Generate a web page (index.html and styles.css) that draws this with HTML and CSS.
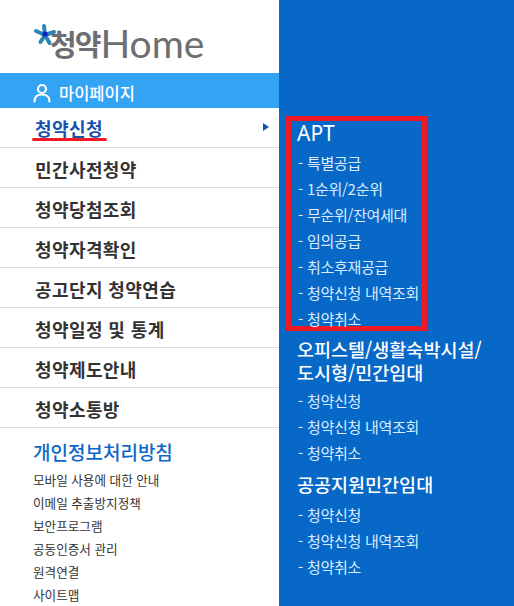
FILE: index.html
```html
<!DOCTYPE html>
<html lang="ko">
<head>
<meta charset="utf-8">
<title>청약Home</title>
<link rel="stylesheet" href="styles.css">
</head>
<body>
<div class="app">
  <aside class="side">
    <div class="logo">
      <span class="logo-ko">청약</span><span class="logo-en">Home</span>
      <svg class="star" width="24" height="24" viewBox="0 0 24 24">
        <g stroke="#2b86b4" stroke-width="4" stroke-linecap="round">
          <path d="M12 12 L11 3"/><path d="M12 12 L21 9"/><path d="M12 12 L3 8"/><path d="M12 12 L7.500 19"/><path d="M12 12 L16.500 20"/>
        </g>
        <circle cx="12" cy="11" r="2.600" fill="#0a22c8"/>
      </svg>
    </div>
    <a class="mypage">
      <svg width="18" height="20" viewBox="0 0 18 20" fill="none" stroke="#fff" stroke-width="2.200" stroke-linecap="round"><circle cx="9" cy="6" r="4"/><path d="M1.500 18.500c0-4.500 3-7 7.500-7s7.500 2.500 7.500 7"/></svg>
      <span>마이페이지</span>
    </a>
    <nav class="main-nav">
      <a class="nav-row active"><span class="active-label">청약신청</span><i class="caret"></i></a>
      <a class="nav-row">민간사전청약</a>
      <a class="nav-row">청약당첨조회</a>
      <a class="nav-row">청약자격확인</a>
      <a class="nav-row">공고단지 청약연습</a>
      <a class="nav-row">청약일정 및 통계</a>
      <a class="nav-row">청약제도안내</a>
      <a class="nav-row">청약소통방</a>
    </nav>
    <div class="foot">
      <a class="privacy">개인정보처리방침</a>
      <a class="foot-link">모바일 사용에 대한 안내</a>
      <a class="foot-link">이메일 추출방지정책</a>
      <a class="foot-link">보안프로그램</a>
      <a class="foot-link">공동인증서 관리</a>
      <a class="foot-link">원격연결</a>
      <a class="foot-link">사이트맵</a>
    </div>
  </aside>
  <section class="panel">
    <div class="group boxed">
      <h2 class="head">APT</h2>
      <ul class="list">
        <li><span class="dash">-</span>특별공급</li>
        <li><span class="dash">-</span>1순위/2순위</li>
        <li><span class="dash">-</span>무순위/잔여세대</li>
        <li><span class="dash">-</span>임의공급</li>
        <li><span class="dash">-</span>취소후재공급</li>
        <li><span class="dash">-</span>청약신청 내역조회</li>
        <li><span class="dash">-</span>청약취소</li>
      </ul>
    </div>
    <div class="group second">
      <h2 class="head">오피스텔/생활숙박시설/<br>도시형/민간임대</h2>
      <ul class="list">
        <li><span class="dash">-</span>청약신청</li>
        <li><span class="dash">-</span>청약신청 내역조회</li>
        <li><span class="dash">-</span>청약취소</li>
      </ul>
    </div>
    <div class="group third">
      <h2 class="head">공공지원민간임대</h2>
      <ul class="list">
        <li><span class="dash">-</span>청약신청</li>
        <li><span class="dash">-</span>청약신청 내역조회</li>
        <li><span class="dash">-</span>청약취소</li>
      </ul>
    </div>
  </section>
</div>
</body>
</html>
```
FILE: styles.css
```css
* { box-sizing: border-box; }
html, body { margin: 0; padding: 0; }
body { font-family: "Noto Sans CJK KR", "Noto Sans", sans-serif; overflow: hidden; }
.app { display: grid; grid-template-columns: 279px 235px; width: 514px; height: 606px; }
.side { background: #fff; display: flex; flex-direction: column; overflow: hidden; }
.logo { height: 74px; padding: 14px 0 0 50px; display: flex; align-items: center; position: relative; color: #6d6e71; }
.star { position: absolute; left: 33px; top: 23px; }
.logo-ko { font-size: 29px; font-weight: 700; letter-spacing: -2px; line-height: 36px; }
.logo-en { font-family: "Lato", sans-serif; font-weight: 400; font-size: 39px; line-height: 40px; margin-left: 1px; }
.mypage { height: 36px; background: #33a3f4; color: #fff; display: flex; align-items: center; gap: 8px; padding: 5px 0 0 33px; font-size: 16.500px; font-weight: 500; }
.nav-row { height: 40px; border-bottom: 1px solid #dcdcdc; display: flex; align-items: center; padding: 2px 0 0 35px; font-size: 18px; font-weight: 700; color: #333; letter-spacing: 0.400px; position: relative; }
.nav-row.active { color: #1553ad; align-items: flex-start; padding-top: 8px; line-height: 24px; }
.active-label::after { content: ""; position: absolute; left: 32px; top: 30px; width: 75px; height: 3px; border-radius: 2px; background: #ed1c24; }
.caret { position: absolute; left: 263px; top: 15px; width: 0; height: 0; border-left: 6px solid #1553ad; border-top: 4px solid transparent; border-bottom: 4px solid transparent; }
.foot { display: flex; flex-direction: column; padding: 10px 0 0 33px; }
.privacy { color: #0c68c8; font-size: 19px; font-weight: 500; line-height: 28px; margin-bottom: 2px; }
.foot-link { color: #333; font-size: 12.600px; line-height: 23px; }
.panel { background: #0768c8; color: #fff; display: flex; flex-direction: column; padding-top: 116px; }
.group { padding-left: 18px; }
.group.boxed { margin-left: 7px; width: 141px; height: 215px; border: 5px solid #ed1c24; padding-left: 6px; }
.head { margin: 0; font-size: 18.500px; font-weight: 500; line-height: 23px; color: #fff; }
.boxed .head { font-family: "Noto Sans", sans-serif; font-size: 21px; font-weight: 400; line-height: 24px; }
.list { list-style: none; margin: 5px 0 0; padding: 0; }
.list li { height: 26px; line-height: 26px; font-size: 15px; letter-spacing: -0.300px; color: #dcecff; white-space: nowrap; display: flex; }
.dash { width: 10px; padding-left: 1px; flex: none; }
.second { margin-top: 7px; }
.second .list { margin-top: 4px; }
.third { margin-top: 6px; }
.third .head { line-height: 25px; }
```
